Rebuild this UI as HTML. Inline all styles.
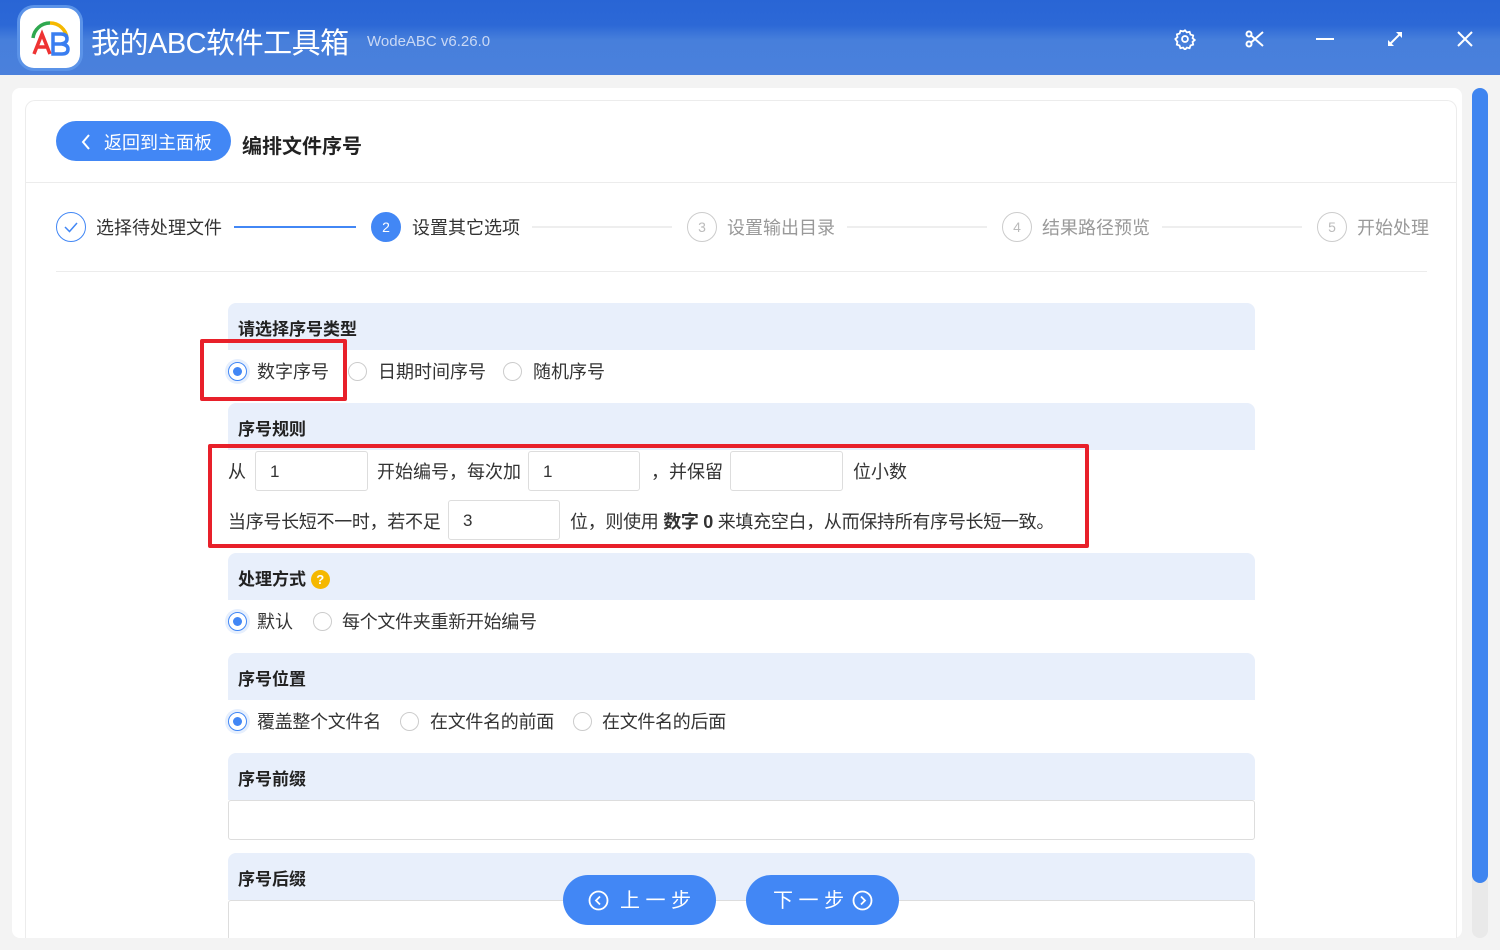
<!DOCTYPE html>
<html style="height:950px;overflow:hidden"><head><meta charset="utf-8"><style>
*{margin:0;padding:0;box-sizing:border-box}
body{width:1500px;height:950px;background:#f3f3f3;font-family:"Liberation Sans","Noto Sans CJK SC",sans-serif;color:#333;position:relative;overflow:hidden}
.a{position:absolute}
.title{left:0;top:0;width:1500px;height:75px;background:linear-gradient(180deg,#2965d5 0,#2c68d6 25px,#477fdb 40px,#4a80dc 100%)}
.logo{left:20px;top:8px;width:60px;height:60px;border-radius:14px;background:#fff;box-shadow:0 0 0 3px #5b93e8}
.apptitle{left:91px;top:20px;font-size:29px;color:#fff;letter-spacing:-0.5px}
.ver{left:367px;top:33px;font-size:15px;color:#c9d8f5}
.card{left:12px;top:88px;width:1450px;height:850px;background:#fff;border-radius:8px}
.inner{left:25px;top:100px;width:1432px;height:838px;border:1px solid #ececec;border-bottom:none;border-radius:10px 10px 0 0;background:#fff}
.back{left:56px;top:121px;width:175px;height:40px;border-radius:20px;background:#4287f5;color:#fff;font-size:18px;line-height:44px;padding-left:48px}
.h1{left:242px;top:130px;font-size:20px;font-weight:bold;color:#222}
.hr{height:1px;background:#ececec}
.step{font-size:18px;top:214px}
.circ{width:30px;height:30px;border-radius:50%;border:1px solid #ccc;color:#bbb;font-size:14px;text-align:center;line-height:28px;top:212px}
.sh{left:228px;width:1027px;height:47px;background:#e8effb;border-radius:8px 8px 0 0;font-size:17px;font-weight:bold;color:#222;padding:12px 0 0 10px}
.opt{font-size:18px;color:#333}
.rad{width:19px;height:19px;border-radius:50%;border:1px solid #ccc;background:#fff}
.rad.on{border:1.5px solid #4287f5;box-shadow:0 0 0 3px #e6effd}
.rad.on:after{content:"";position:absolute;left:3.5px;top:3.5px;width:9px;height:9px;border-radius:50%;background:#4287f5}
.inp{height:40px;border:1px solid #ddd;border-radius:3px;background:#fff;font-size:17px;padding:10px 0 0 14px}
.red{border:4px solid #e8202a;border-radius:2px}
.btn{top:875px;width:153px;height:50px;border-radius:25px;background:#4287f5;color:#fff;font-size:20px;line-height:52px}
</style></head><body>
<div class="a title"></div>
<div class="a logo"><svg width="60" height="60" viewBox="0 0 60 60"><path d="M13 30 A17 17 0 0 1 30 15" stroke="#2fa84f" stroke-width="3.5" fill="none"/><path d="M30 15 A17 17 0 0 1 47 30" stroke="#f5b800" stroke-width="3.5" fill="none"/><path d="M14 46 L22 26 L30 46 M17 39 H27" stroke="#e33" stroke-width="3.5" fill="none"/><path d="M33 26 H41 Q47 26 47 31 Q47 35 41 36 H33 Z M33 36 H42 Q48 37 48 41 Q48 46 42 46 H33 Z" stroke="#3a7ef0" stroke-width="3.5" fill="none"/></svg></div>
<div class="a apptitle">我的ABC软件工具箱</div>
<div class="a ver">WodeABC v6.26.0</div>
<svg class="a" style="left:1174px;top:28px" width="22" height="22" viewBox="0 0 24 24" fill="none" stroke="#fff" stroke-width="2"><circle cx="12" cy="12" r="3.2"/><path d="M12 2.5l2 2.3 3-.6 1 2.9 2.9 1-.6 3 2.3 2-2.3 2 .6 3-2.9 1-1 2.9-3-.6-2 2.3-2-2.3-3 .6-1-2.9-2.9-1 .6-3L1.5 12l2.3-2-.6-3 2.9-1 1-2.9 3 .6z"/></svg>
<svg class="a" style="left:1245px;top:29px" width="20" height="20" viewBox="0 0 20 20" fill="none" stroke="#fff" stroke-width="2"><circle cx="4" cy="5" r="2.5"/><circle cx="4" cy="15" r="2.5"/><path d="M6 6.5L18 17M6 13.5L18 3"/></svg>
<div class="a" style="left:1316px;top:38px;width:18px;height:2px;background:#fff"></div>
<svg class="a" style="left:1386px;top:30px" width="18" height="18" viewBox="0 0 18 18" fill="#fff" stroke="#fff" stroke-width="2"><path d="M4 14L14 4" /><path d="M10 2h6v6z" stroke="none"/><path d="M2 10v6h6z" stroke="none"/></svg>
<svg class="a" style="left:1457px;top:31px" width="16" height="16" viewBox="0 0 16 16" stroke="#fff" stroke-width="2"><path d="M1 1L15 15M15 1L1 15"/></svg>

<div class="a card"></div>
<div class="a inner"></div>
<div class="a" style="left:1472px;top:88px;width:16px;height:850px;background:#e9e9e9;border-radius:8px"></div>
<div class="a" style="left:1472px;top:88px;width:16px;height:795px;background:#3f85f0;border-radius:8px"></div>

<div class="a back">返回到主面板</div>
<svg class="a" style="left:80px;top:133px" width="12" height="18" viewBox="0 0 12 18" fill="none" stroke="#fff" stroke-width="2"><path d="M9 2L3 9l6 7"/></svg>
<div class="a h1">编排文件序号</div>
<div class="a hr" style="left:26px;top:182px;width:1430px"></div>

<div class="a circ" style="left:56px;border-color:#4287f5"><svg width="28" height="28" viewBox="0 0 28 28" fill="none" stroke="#4287f5" stroke-width="1.5"><path d="M8 14l4.5 4.5L20 10"/></svg></div>
<div class="a step" style="left:96px">选择待处理文件</div>
<div class="a" style="left:234px;top:226px;width:122px;height:2px;background:#4287f5"></div>
<div class="a circ" style="left:371px;background:#4287f5;border-color:#4287f5;color:#fff">2</div>
<div class="a step" style="left:412px">设置其它选项</div>
<div class="a" style="left:532px;top:226px;width:140px;height:2px;background:#eee"></div>
<div class="a circ" style="left:687px">3</div>
<div class="a step" style="left:727px;color:#999">设置输出目录</div>
<div class="a" style="left:847px;top:226px;width:140px;height:2px;background:#eee"></div>
<div class="a circ" style="left:1002px">4</div>
<div class="a step" style="left:1042px;color:#999">结果路径预览</div>
<div class="a" style="left:1162px;top:226px;width:140px;height:2px;background:#eee"></div>
<div class="a circ" style="left:1317px">5</div>
<div class="a step" style="left:1357px;color:#999">开始处理</div>
<div class="a hr" style="left:56px;top:271px;width:1371px"></div>

<div class="a sh" style="top:303px">请选择序号类型</div>
<div class="a rad on" style="left:228px;top:362px"></div><div class="a opt" style="left:257px;top:358px">数字序号</div>
<div class="a rad" style="left:348px;top:362px"></div><div class="a opt" style="left:378px;top:358px">日期时间序号</div>
<div class="a rad" style="left:503px;top:362px"></div><div class="a opt" style="left:533px;top:358px">随机序号</div>
<div class="a red" style="left:200px;top:339px;width:147px;height:62px"></div>

<div class="a sh" style="top:403px">序号规则</div>
<div class="a opt" style="left:228px;top:458px">从</div>
<div class="a inp" style="left:255px;top:451px;width:113px">1</div>
<div class="a opt" style="left:377px;top:458px">开始编号，每次加</div>
<div class="a inp" style="left:528px;top:451px;width:112px">1</div>
<div class="a opt" style="left:651px;top:458px">，并保留</div>
<div class="a inp" style="left:730px;top:451px;width:113px"></div>
<div class="a opt" style="left:853px;top:458px">位小数</div>
<div class="a opt" style="left:228px;top:508px;letter-spacing:-0.3px">当序号长短不一时，若不足</div>
<div class="a inp" style="left:448px;top:500px;width:112px">3</div>
<div class="a opt" style="left:570px;top:508px;letter-spacing:-0.3px">位，则使用 <b>数字 0</b> 来填充空白，从而保持所有序号长短一致。</div>
<div class="a red" style="left:208px;top:444px;width:881px;height:104px"></div>

<div class="a sh" style="top:553px">处理方式 <span style="display:inline-block;width:19px;height:19px;border-radius:50%;background:#f5b800;color:#fff;font-size:13px;text-align:center;line-height:19px;vertical-align:1px">?</span></div>
<div class="a rad on" style="left:228px;top:612px"></div><div class="a opt" style="left:257px;top:608px">默认</div>
<div class="a rad" style="left:313px;top:612px"></div><div class="a opt" style="left:342px;top:608px;letter-spacing:-0.3px">每个文件夹重新开始编号</div>

<div class="a sh" style="top:653px">序号位置</div>
<div class="a rad on" style="left:228px;top:712px"></div><div class="a opt" style="left:257px;top:708px;letter-spacing:-0.3px">覆盖整个文件名</div>
<div class="a rad" style="left:400px;top:712px"></div><div class="a opt" style="left:430px;top:708px;letter-spacing:-0.3px">在文件名的前面</div>
<div class="a rad" style="left:573px;top:712px"></div><div class="a opt" style="left:602px;top:708px;letter-spacing:-0.3px">在文件名的后面</div>

<div class="a sh" style="top:753px">序号前缀</div>
<div class="a inp" style="left:228px;top:800px;width:1027px"></div>
<div class="a sh" style="top:853px">序号后缀</div>
<div class="a inp" style="left:228px;top:900px;width:1027px;height:38px;border-bottom:none;border-radius:3px 3px 0 0"></div>
<div class="a" style="left:0;top:938px;width:1500px;height:12px;background:#f3f3f3"></div>

<div class="a btn" style="left:563px;padding-left:57px">上 一 步</div>
<svg class="a" style="left:588px;top:890px" width="21" height="21" viewBox="0 0 21 21" fill="none" stroke="#fff" stroke-width="1.8"><circle cx="10.5" cy="10.5" r="9"/><path d="M12 6.5l-4 4 4 4"/></svg>
<div class="a btn" style="left:746px;padding-left:27px">下 一 步</div>
<svg class="a" style="left:852px;top:890px" width="21" height="21" viewBox="0 0 21 21" fill="none" stroke="#fff" stroke-width="1.8"><circle cx="10.5" cy="10.5" r="9"/><path d="M9 6.5l4 4-4 4"/></svg>
</body></html>
